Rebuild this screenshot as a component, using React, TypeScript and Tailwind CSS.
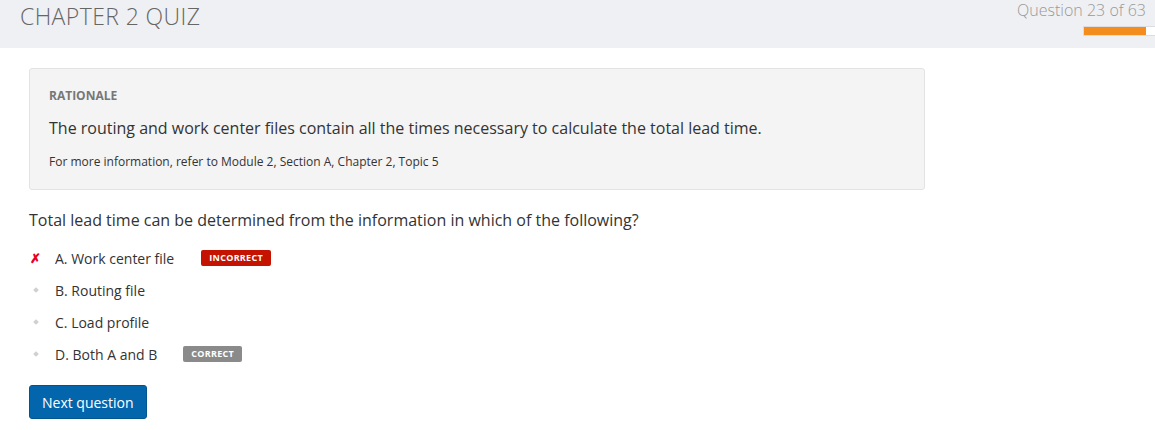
import React from 'react';

const options = [
  { label: 'A. Work center file', wrong: true, badge: 'INCORRECT' },
  { label: 'B. Routing file' },
  { label: 'C. Load profile' },
  { label: 'D. Both A and B', badge: 'CORRECT' },
];

export default function App() {
  return (
    <div className="w-[1155px] h-[430px] bg-white overflow-hidden" style={{ fontFamily: '"Open Sans", sans-serif' }}>
      <header className="h-[48px] bg-[#eff0f4] flex justify-between">
        <h1 className="pl-[20px] pt-[1px] text-[23px] leading-[30px] font-light text-[#666] tracking-[0.4px]">CHAPTER 2 QUIZ</h1>
        <div className="flex flex-col items-end">
          <div className="pr-[9px] text-[16px] leading-[20px] font-light text-[#999] whitespace-nowrap">Question 23 of 63</div>
          <div className="mt-[6px] w-[72px] h-[10px] bg-white border border-[#dcdde2] border-r-0">
            <div className="h-full w-[62px] bg-[#f48c1e]" />
          </div>
        </div>
      </header>

      <main className="px-[29px] pt-[20px]">
        <section className="w-[896px] bg-[#f4f4f4] border border-[#e3e3e3] rounded-[3px] px-[19px] pt-[19px] pb-[19px]">
          <div className="text-[12px] leading-[16px] font-bold text-[#777]">RATIONALE</div>
          <p className="mt-[13px] text-[16px] leading-[22px] text-[#333]">
            The routing and work center files contain all the times necessary to calculate the total lead time.
          </p>
          <p className="mt-[15px] text-[12px] leading-[16px] text-[#333]">
            For more information, refer to Module 2, Section A, Chapter 2, Topic 5
          </p>
        </section>

        <p className="mt-[19px] text-[16px] leading-[22px] text-[#333]">
          Total lead time can be determined from the information in which of the following?
        </p>

        <ul className="mt-[17px] flex flex-col gap-[12px]">
          {options.map((o) => (
            <li key={o.label} className="flex items-center h-[20px] text-[14px] text-[#333]">
              <span className="w-[26px] flex justify-start pl-[1px]">
                {o.wrong ? (
                  <span className="text-[#e8001c] text-[13px] font-bold leading-none">✗</span>
                ) : (
                  <span className="ml-[4px] w-[4px] h-[4px] rotate-45 bg-[#d0d0d0]" />
                )}
              </span>
              <span>{o.label}</span>
              {o.badge && (
                <span
                  className={
                    o.badge === 'INCORRECT'
                      ? 'ml-[27px] h-[16px] px-[8px] flex items-center rounded-[2px] bg-[#c41300] text-white text-[9px] font-bold tracking-[0.3px]'
                      : 'ml-[26px] h-[16px] px-[8px] flex items-center rounded-[2px] bg-[#8a8a8a] text-white text-[9px] font-bold tracking-[0.3px]'
                  }
                >
                  {o.badge}
                </span>
              )}
            </li>
          ))}
        </ul>

        <button className="mt-[21px] h-[34px] px-[12px] rounded-[3px] bg-[#0366ad] border border-[#02548f] text-white text-[14px]">
          Next question
        </button>
      </main>
    </div>
  );
}
